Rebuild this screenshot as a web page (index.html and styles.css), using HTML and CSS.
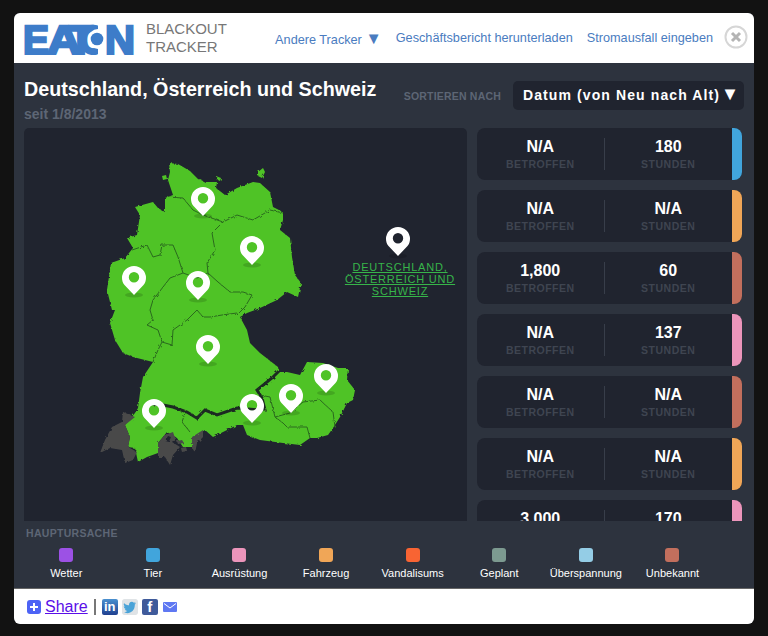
FILE: index.html
```html
<!DOCTYPE html>
<html lang="de">
<head>
    <meta charset="UTF-8">
    <title>Blackout Tracker</title>
    <link rel="stylesheet" href="styles.css">
</head>
<body>
    <div class="window">
        <header class="top">
            <svg class="logo" viewBox="0 0 114 32" role="img" aria-label="Eaton">
                <g class="logo-text">
                    <text x="1" y="30.500" textLength="26" lengthAdjust="spacingAndGlyphs">E</text>
                    <text x="25" y="30.500" textLength="34" lengthAdjust="spacingAndGlyphs">A</text>
                    <text x="47" y="30.500" textLength="24" lengthAdjust="spacingAndGlyphs">T</text>
                    <text x="58" y="30.500" textLength="26" lengthAdjust="spacingAndGlyphs">O</text>
                </g>
                <circle cx="76" cy="16" r="10" fill="#fff"/>
                <rect x="76" y="0" width="8" height="32" fill="#fff"/>
                <circle cx="75" cy="16" r="6.300" fill="#3d7cc9"/>
                <text class="logo-text" x="83" y="30.500" textLength="30" lengthAdjust="spacingAndGlyphs">N</text>
            </svg>
            <div class="product">BLACKOUT<br>TRACKER</div>
            <nav class="nav">
                <a href="#">Andere Tracker <span class="arrow">▼</span></a>
                <a href="#">Geschäftsbericht herunterladen</a>
                <a href="#">Stromausfall eingeben</a>
            </nav>
            <svg class="close" viewBox="0 0 24 24">
                <circle cx="12" cy="12" r="10.500" fill="none" stroke="#d6d6d6" stroke-width="2"/>
                <path d="M8 8l8 8M16 8l-8 8" stroke="#b4b4b4" stroke-width="3"/>
            </svg>
        </header>

        <main class="content">
            <div class="title-row">
                <div>
                    <h1>Deutschland, Österreich und Schweiz</h1>
                    <div class="since">seit 1/8/2013</div>
                </div>
                <div class="sort">
                    <span class="sort-label">SORTIEREN NACH</span>
                    <span class="sort-box">Datum (von Neu nach Alt) <span class="arrow sort-arrow">▼</span></span>
                </div>
            </div>

            <div class="panels">
                <div class="map">
                    <svg class="map-svg" viewBox="24 128 443 393">
                        <defs>
                            <filter id="rough" x="-5%" y="-5%" width="110%" height="110%">
                                <feTurbulence type="fractalNoise" baseFrequency="0.3" numOctaves="2" seed="4"/>
                                <feDisplacementMap in="SourceGraphic" scale="3"/>
                                <feGaussianBlur stdDeviation="0.25"/>
                            </filter>
                            <g id="pin">
                                <ellipse cx="0" cy="29" rx="9" ry="2.500" fill="#000" opacity="0.14"/>
                                <path fill="#fff" fill-rule="evenodd" d="M0 29L-9.500 19C-11.200 17-12 14.500-12 12A12 12 0 0 1 12 12C12 14.500 11.200 17 9.500 19ZM0 6A5.200 5.200 0 1 0 0 16.400A5.200 5.200 0 1 0 0 6Z"/>
                            </g>
                        </defs>

                        <g filter="url(#rough)">
                            <path class="land" d="M169 163L178 164L190 171L197 178L205 182L217 182L216 188L225 195L237 188L253 182L260 183L270 192L273 207L283 212L283 220L280 230L290 238L292 257L295 275L301 283L298 297L287 292L277 300L260 308L247 313L240 317L247 330L250 343L260 353L278 367L279 372L287 372L300 375L307 362L323 363L338 368L348 368L347 380L355 390L353 400L347 403L340 417L333 428L328 435L317 438L310 438L300 445L283 443L260 440L247 435L243 425L237 425L223 432L213 437L205 430L197 435L192 447L183 447L177 438L167 432L158 443L158 453L147 457L138 462L135 448L128 447L130 437L125 425L135 413L138 408L140 393L143 377L153 362L133 357L123 353L115 340L110 323L115 310L112 310L107 290L111 263L125 258L133 248L127 238L137 235L140 215L135 207L153 202L158 208L165 212L165 198L173 195L168 180L170 172Z"/>
                            <path class="land" d="M162 176l4-1 1 4-4 1zM258 172l5-4 2 4-3 6-4-2zM216 176l5 2-1 3-4-2z"/>
                            <path class="swiss" d="M123 412L135 417L125 425L130 437L128 447L137 452L133 460L125 463L122 450L110 448L100 453L105 440L112 427L122 422Z"/>
                            <path class="swiss" fill-rule="evenodd" d="M158 443L165 435L173 432L175 438L172 442L180 447L173 455L170 465L165 457L158 457ZM168 436L165 441L169 442L171 437Z"/>
                            <path class="swiss" d="M177 441l5-1 2 3-6 1zM192 437L203 430L203 437L197 443L195 453L192 447ZM181 448l5-1 1 4-5 1z"/>
                            <path class="border" d="M167 197L183 198L193 210L203 215L223 222L237 215L253 220L270 210L283 213"/>
                            <path class="border" d="M223 222L212 233L215 250L207 263L208 273L218 282L230 292L243 292L252 295L245 307L237 315"/>
                            <path class="border" d="M132 250L147 245L153 257L160 255L162 245L173 245L178 257L183 273L170 278L153 300L150 310L153 320L147 325L158 330L162 342L158 350L153 362"/>
                            <path class="border" d="M162 342L172 345L173 330L187 320L197 310L203 317L210 317L222 315L237 313"/>
                            <path class="border" d="M183 273L197 278L208 273"/>
                            <path class="border" d="M185 413L182 422L190 432"/>
                            <path class="border" d="M260 395L270 397L275 417L283 423L287 427L307 427L310 438"/>
                            <path class="border" d="M275 417L290 413L303 402L320 400L333 412L335 427"/>
                            <path class="border-thick" d="M147 403L163 405L173 407L187 412L197 418L205 410L217 415L237 408L260 410L265 410L262 398L257 390L272 378L279 371"/>
                        </g>

                        <use href="#pin" x="203" y="187"/>
                        <use href="#pin" x="252" y="236"/>
                        <use href="#pin" x="134" y="266"/>
                        <use href="#pin" x="198" y="271"/>
                        <use href="#pin" x="208" y="335"/>
                        <use href="#pin" x="154" y="399"/>
                        <use href="#pin" x="252" y="394"/>
                        <use href="#pin" x="291" y="384"/>
                        <use href="#pin" x="326" y="364"/>
                        <use href="#pin" x="398" y="227"/>
                    </svg>
                    <a class="map-label" href="#">DEUTSCHLAND, ÖSTERREICH UND SCHWEIZ</a>
                </div>

                <div class="list">
                    <div class="card">
                        <div class="stat"><b>N/A</b><span>BETROFFEN</span></div>
                        <div class="stat"><b>180</b><span>STUNDEN</span></div>
                        <i class="stripe tier"></i>
                    </div>
                    <div class="card">
                        <div class="stat"><b>N/A</b><span>BETROFFEN</span></div>
                        <div class="stat"><b>N/A</b><span>STUNDEN</span></div>
                        <i class="stripe fahrzeug"></i>
                    </div>
                    <div class="card">
                        <div class="stat"><b>1,800</b><span>BETROFFEN</span></div>
                        <div class="stat"><b>60</b><span>STUNDEN</span></div>
                        <i class="stripe unbekannt"></i>
                    </div>
                    <div class="card">
                        <div class="stat"><b>N/A</b><span>BETROFFEN</span></div>
                        <div class="stat"><b>137</b><span>STUNDEN</span></div>
                        <i class="stripe ausruestung"></i>
                    </div>
                    <div class="card">
                        <div class="stat"><b>N/A</b><span>BETROFFEN</span></div>
                        <div class="stat"><b>N/A</b><span>STUNDEN</span></div>
                        <i class="stripe unbekannt"></i>
                    </div>
                    <div class="card">
                        <div class="stat"><b>N/A</b><span>BETROFFEN</span></div>
                        <div class="stat"><b>N/A</b><span>STUNDEN</span></div>
                        <i class="stripe fahrzeug"></i>
                    </div>
                    <div class="card">
                        <div class="stat"><b>3.000</b><span>BETROFFEN</span></div>
                        <div class="stat"><b>170</b><span>STUNDEN</span></div>
                        <i class="stripe ausruestung"></i>
                    </div>
                </div>
            </div>

            <div class="legend-title">HAUPTURSACHE</div>
            <div class="legend">
                <div class="cause"><i class="swatch wetter"></i>Wetter</div>
                <div class="cause"><i class="swatch tier"></i>Tier</div>
                <div class="cause"><i class="swatch ausruestung"></i>Ausrüstung</div>
                <div class="cause"><i class="swatch fahrzeug"></i>Fahrzeug</div>
                <div class="cause"><i class="swatch vandalismus"></i>Vandalisums</div>
                <div class="cause"><i class="swatch geplant"></i>Geplant</div>
                <div class="cause"><i class="swatch ueberspannung"></i>Überspannung</div>
                <div class="cause"><i class="swatch unbekannt"></i>Unbekannt</div>
            </div>
        </main>

        <footer class="share">
            <svg class="icon-plus" viewBox="0 0 14 14">
                <rect width="14" height="14" rx="3" fill="#4d63f5"/>
                <path d="M7 3v8M3 7h8" stroke="#fff" stroke-width="2"/>
            </svg>
            <a class="share-link" href="#">Share</a>
            <span class="sep"></span>
            <span class="social linkedin">in</span>
            <svg class="social-svg" viewBox="0 0 16 16">
                <rect width="16" height="16" rx="2" fill="#dfe3e6"/>
                <path fill="#4aa3d8" d="M14 4.200l-1.600.4c.6-.4 1-.9 1.200-1.500-.6.3-1.100.5-1.700.6a2.800 2.800 0 0 0-4.800 2.500C4.900 6.500 3.200 5.500 2.100 4c-.7 1.200-.3 2.800.9 3.600-.4 0-.9-.1-1.200-.3 0 1.300.9 2.500 2.200 2.800-.4.100-.8.100-1.200 0 .3 1.100 1.400 1.900 2.600 2-1.100.8-2.400 1.200-3.800 1 4.900 3 11.600-.300 11.200-7.600.5-.4.900-.8 1.200-1.300z"/>
            </svg>
            <span class="social facebook">f</span>
            <svg class="icon-mail" viewBox="0 0 14 10">
                <rect width="14" height="10" rx="1" fill="#5f78f2"/>
                <path d="M1 1.500L7 6l6-4.500" fill="none" stroke="#fff" stroke-width="1"/>
            </svg>
        </footer>
    </div>
</body>
</html>
```

FILE: styles.css
```css
html, body {
    margin: 0;
    padding: 0;
    height: 100%;
    background: #121212;
    overflow: hidden;
    font-family: "Liberation Sans", Arial, sans-serif;
}

.window {
    width: 740px;
    height: 611px;
    margin: 13px 0 0 14px;
    border-radius: 6px;
    overflow: hidden;
    display: flex;
    flex-direction: column;
    background: #2d333e;
}

/* header */
.top {
    height: 50px;
    flex: none;
    display: flex;
    align-items: center;
    background: #fff;
    padding-left: 8px;
}

.logo {
    width: 114px;
    height: 32px;
    margin-top: 1px;
    overflow: hidden;
}

.logo-text {
    font-family: "Liberation Sans", Arial, sans-serif;
    font-weight: bold;
    font-size: 41px;
    fill: #3d7cc9;
    stroke: #3d7cc9;
    stroke-width: 2.400px;
}

.product {
    margin-left: 10px;
    margin-top: -1px;
    font-size: 15px;
    line-height: 18px;
    color: #777;
}

.nav {
    margin-left: auto;
    display: flex;
    align-items: center;
    gap: 14px;
    font-size: 12.700px;
}

.nav a {
    color: #4a7cc0;
    text-decoration: none;
}

.arrow {
    font-size: 1.300em;
    line-height: 1;
}

.sort-arrow {
    margin-left: -4px;
}

.close {
    width: 24px;
    height: 24px;
    margin: -2px 6px 0 11px;
}

/* title row */
.content {
    flex: 1;
    padding: 0 10px;
    min-height: 0;
}

.title-row {
    height: 65px;
    display: flex;
    justify-content: space-between;
    padding-top: 14px;
    box-sizing: border-box;
}

h1 {
    margin: 0;
    font-size: 19.700px;
    line-height: 24px;
    color: #fff;
}

.since {
    margin-top: 5px;
    font-size: 14px;
    font-weight: bold;
    color: #5d6675;
}

.sort {
    display: flex;
    align-items: center;
    height: 29px;
    margin-top: 4px;
}

.sort-label {
    font-size: 10.500px;
    font-weight: bold;
    color: #5d6675;
    letter-spacing: 0.2px;
    margin-top: 1px;
}

.sort-box {
    margin-left: 12px;
    width: 231px;
    box-sizing: border-box;
    height: 29px;
    line-height: 29px;
    padding-left: 10px;
    border-radius: 5px;
    background: #20242f;
    color: #fff;
    font-size: 14px;
    font-weight: bold;
    letter-spacing: 1.100px;
    white-space: nowrap;
}

/* map and list */
.panels {
    display: flex;
    gap: 10px;
    height: 393px;
    overflow: hidden;
}

.map {
    position: relative;
    width: 443px;
    flex: none;
    background: #20242f;
    border-radius: 5px 5px 0 0;
}

.map-svg {
    display: block;
    width: 443px;
    height: 393px;
}

.land {
    fill: #4fc327;
}

.swiss {
    fill: #4a4a4a;
}

.border {
    fill: none;
    stroke: #2a6a1e;
    stroke-width: 1px;
}

.border-thick {
    fill: none;
    stroke: #1c2a24;
    stroke-width: 3px;
}

.map-label {
    position: absolute;
    left: 316px;
    top: 133px;
    width: 120px;
    text-align: center;
    font-size: 11px;
    line-height: 12px;
    letter-spacing: 0.8px;
    color: #37b54a;
}

.list {
    width: 265px;
    flex: none;
    display: flex;
    flex-direction: column;
    gap: 10px;
}

.card {
    flex: none;
    height: 52px;
    display: flex;
    background: #20242f;
    border-radius: 8px;
    overflow: hidden;
    padding-top: 10px;
    box-sizing: border-box;
}

.stat {
    width: 127.500px;
    height: 32px;
    text-align: center;
    color: #fff;
    box-sizing: border-box;
}

.stat:first-child {
    border-right: 1px solid #383e4a;
}

.stat b {
    display: block;
    margin-top: 1px;
    font-size: 16px;
    line-height: 16px;
}

.stat span {
    display: block;
    margin-top: 3px;
    font-size: 10.500px;
    line-height: 12px;
    font-weight: bold;
    letter-spacing: 0.5px;
    color: #3f4551;
}

.stripe {
    display: block;
    width: 10px;
    height: 52px;
    margin-top: -10px;
}

/* legend */
.legend-title {
    margin: 6px 0 0 2px;
    font-size: 10.500px;
    line-height: 12px;
    font-weight: bold;
    letter-spacing: 0.3px;
    color: #5d6675;
}

.legend {
    display: grid;
    grid-template-columns: repeat(8, 86.600px);
    margin: 9px 0 0 -1px;
}

.cause {
    display: flex;
    flex-direction: column;
    align-items: center;
    font-size: 11px;
    line-height: 13px;
    color: #fff;
    white-space: nowrap;
}

.swatch {
    display: block;
    width: 14px;
    height: 14px;
    border-radius: 3px;
    margin-bottom: 5px;
}

.wetter { background: #9c51e5; }
.tier { background: #41a5dc; }
.ausruestung { background: #ec95bb; }
.fahrzeug { background: #f0a657; }
.vandalismus { background: #f86433; }
.geplant { background: #7c9a90; }
.ueberspannung { background: #94cde6; }
.unbekannt { background: #c26f5d; }

/* footer */
.share {
    height: 36px;
    flex: none;
    display: flex;
    align-items: center;
    background: #fff;
    border-top: 1px solid #666;
    box-sizing: border-box;
    padding-left: 13px;
}

.icon-plus {
    width: 14px;
    height: 14px;
}

.share-link {
    margin-left: 4px;
    font-size: 16px;
    color: #5a0fe8;
}

.sep {
    width: 2px;
    height: 16px;
    margin: 0 6px;
    background: #777;
}

.social,
.social-svg {
    display: block;
    width: 16px;
    height: 16px;
    border-radius: 2px;
    margin-right: 4px;
}

.social {
    color: #fff;
    font-weight: bold;
    text-align: center;
    line-height: 16px;
    overflow: hidden;
}

.linkedin {
    font-size: 13px;
    background: linear-gradient(#4a90cf, #1f3f8f);
}

.facebook {
    font-size: 15px;
    background: #3f5a9a;
}

.icon-mail {
    width: 14px;
    height: 10px;
    margin-left: 1px;
}
```
